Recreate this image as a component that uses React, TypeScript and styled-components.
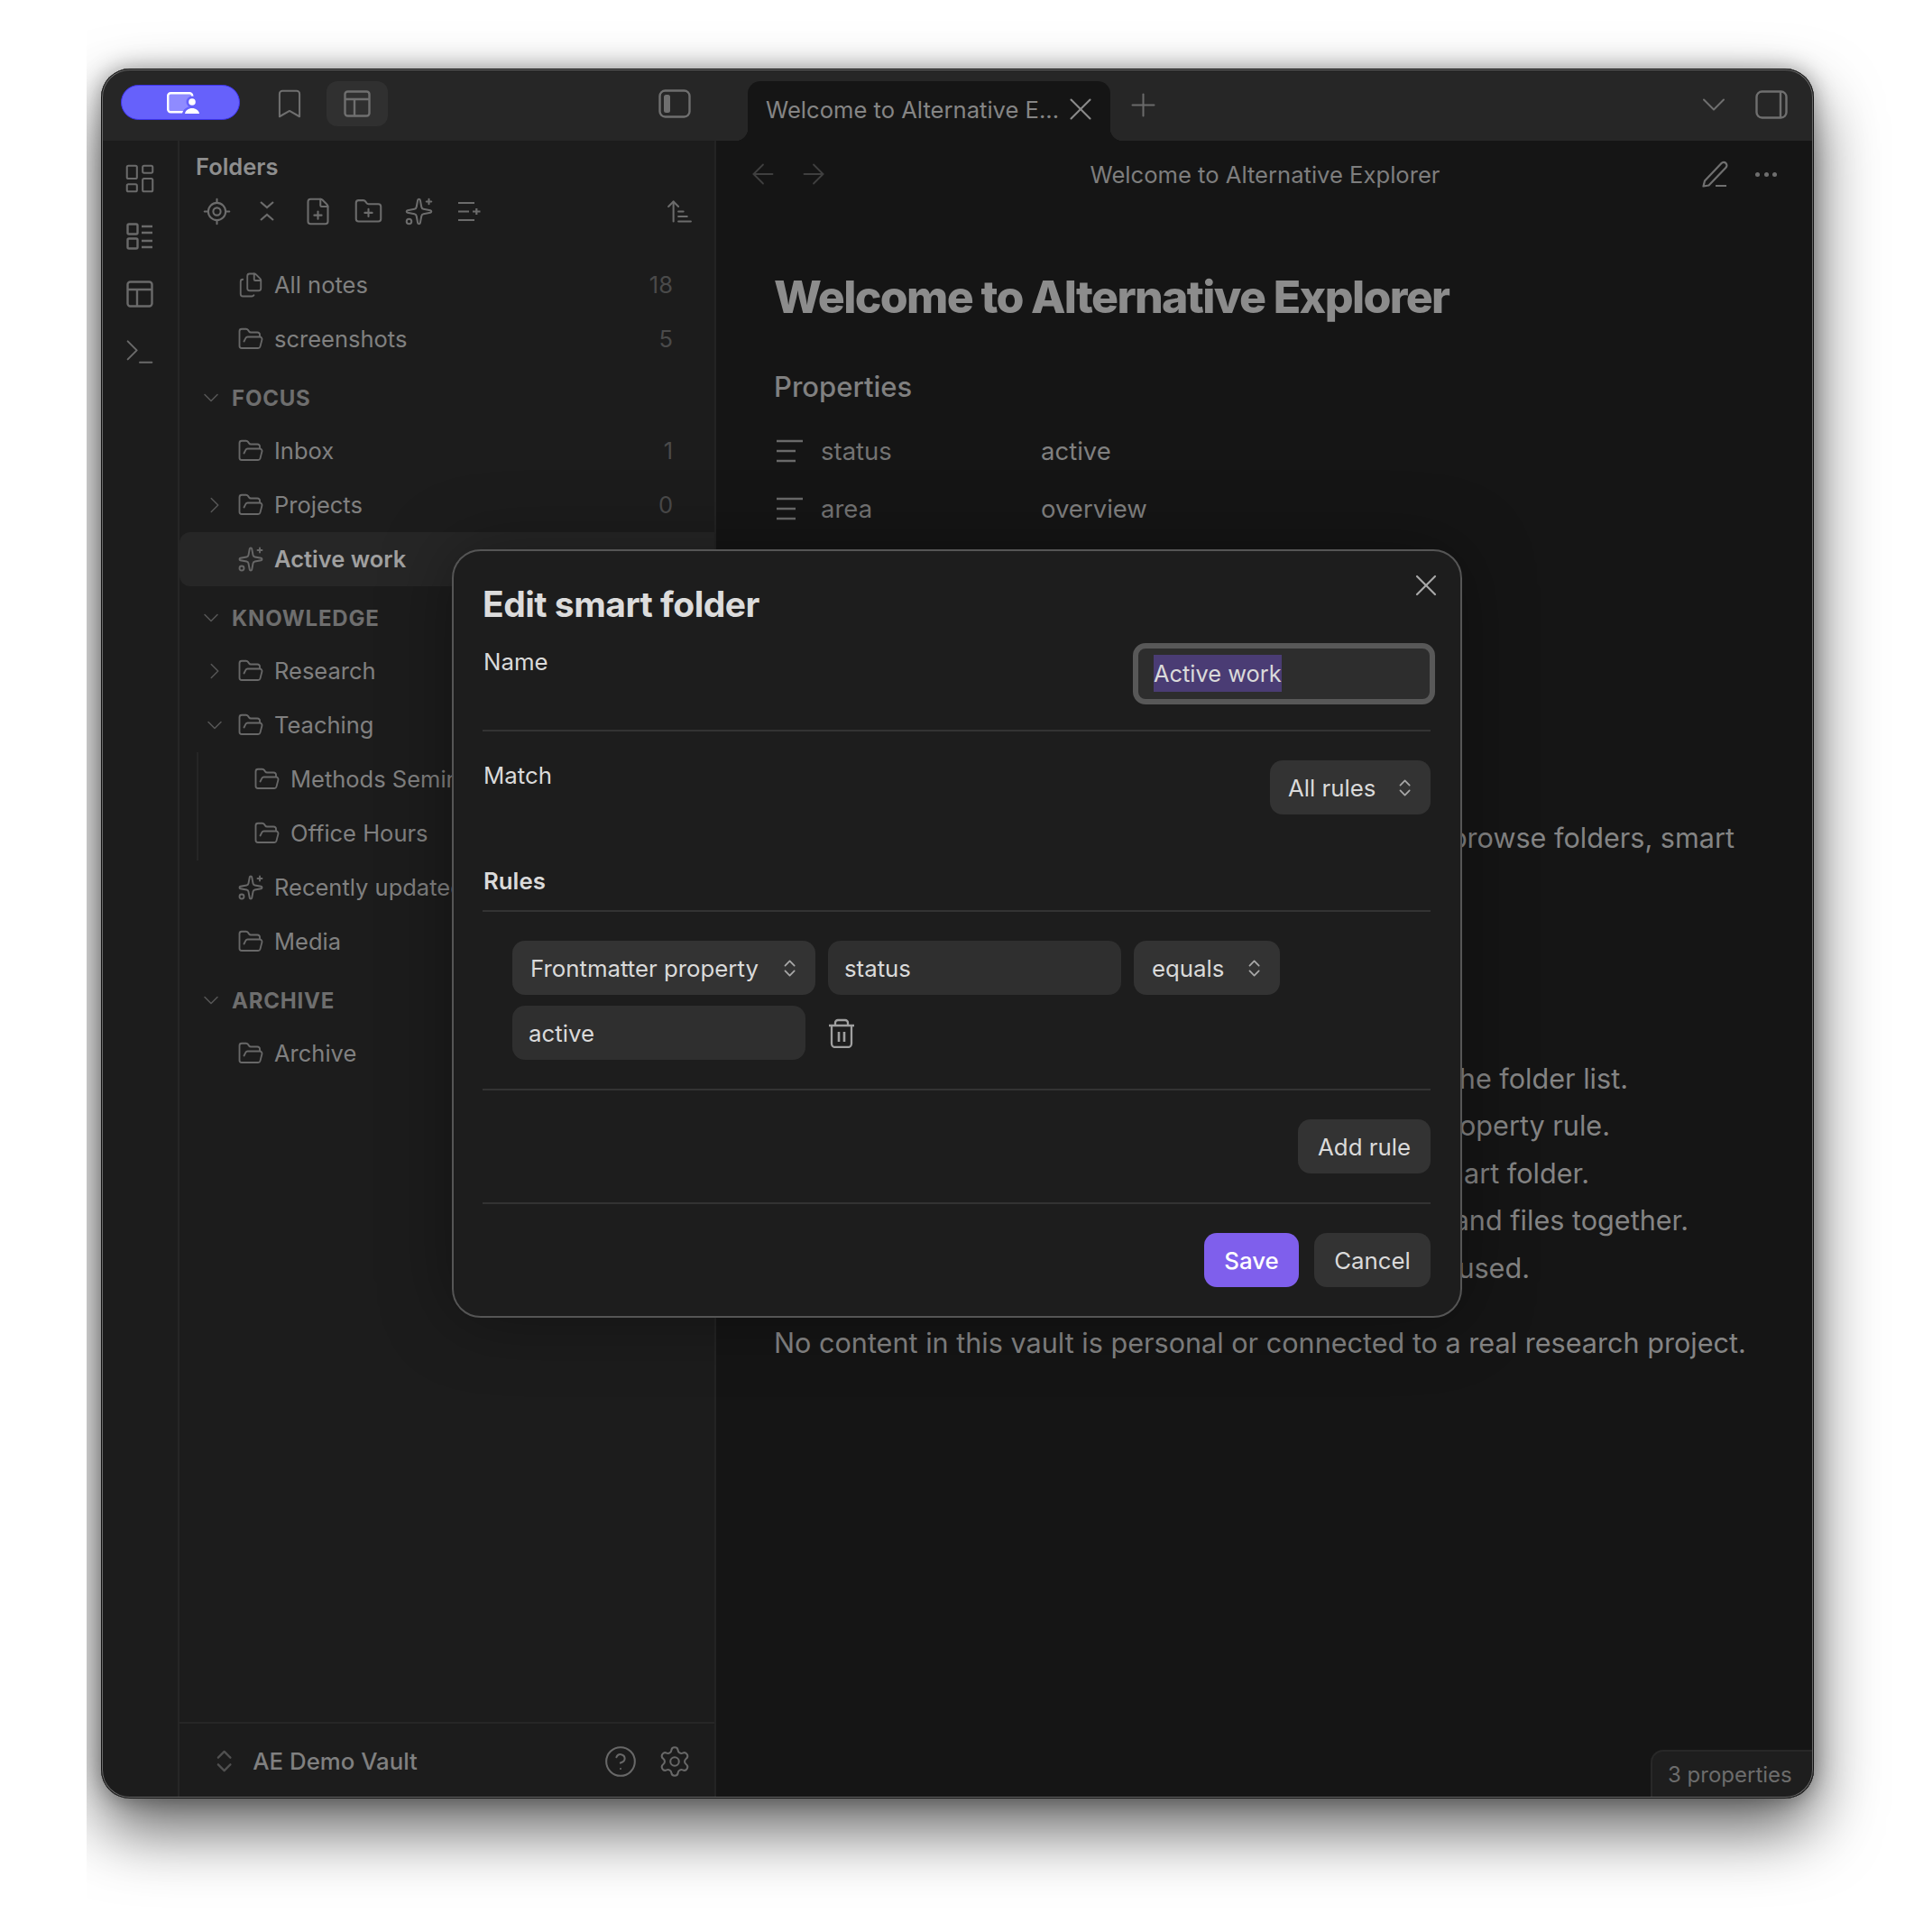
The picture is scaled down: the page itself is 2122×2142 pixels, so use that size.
import React from "react";
import styled, { createGlobalStyle } from "styled-components";
import {
  ArrowLeft,
  ArrowRight,
  ArrowUpNarrowWide,
  Bookmark,
  ChevronDown,
  ChevronRight,
  CircleHelp,
  FilePlus,
  Files,
  FolderOpen,
  FolderPlus,
  LayoutDashboard,
  LocateFixed,
  Plus,
  Settings,
  Sparkles,
  Terminal,
  X
} from "lucide-react";

const GlobalStyle = createGlobalStyle`
  html, body { margin: 0; padding: 0; background: #fff; }
  body { font-family: Inter, "Noto Sans", sans-serif; }
  * { box-sizing: border-box; }
  svg { flex-shrink: 0; }
`;

const Stage = styled.div`
  width: 2026px;
  height: 2142px;
  margin-left: 96px;
  padding: 76px 0 0 16px;
  overflow: hidden;
  background: #fff;
`;

const Win = styled.div`
  position: relative;
  width: 1899px;
  height: 1918px;
  border-radius: 32px;
  background: #1c1c1c;
  overflow: hidden;
  box-shadow: 0 34px 72px rgba(0, 0, 0, 0.62), 0 0 24px rgba(0, 0, 0, 0.35);
  &::after {
    content: "";
    position: absolute;
    inset: 0;
    border-radius: 32px;
    border: 2px solid #6a6a6a;
    outline: 1px solid #111;
    outline-offset: -1px;
    pointer-events: none;
  }
`;

const TitleBar = styled.div`
  display: flex;
  height: 80px;
  background: #262626;
`;

const TitleLeft = styled.div`
  display: flex;
  align-items: center;
  width: 682px;
  padding: 0 28px 2px 22px;
`;

const Pill = styled.div`
  display: flex;
  align-items: center;
  justify-content: center;
  width: 132px;
  height: 39px;
  margin-bottom: 3px;
  padding-left: 6px;
  border-radius: 20px;
  background: #6661fb;
  border: 1px solid #3d33ee;
`;

const TitleBtn = styled.div<{ $active?: boolean }>`
  display: flex;
  align-items: center;
  justify-content: center;
  width: ${({ $active }) => ($active ? "68px" : "44px")};
  height: 50px;
  margin-left: ${({ $active }) => ($active ? "19px" : "33px")};
  border-radius: 12px;
  color: #6f6f6f;
  background: ${({ $active }) => ($active ? "#303030" : "transparent")};
`;

const LeftToggle = styled.div`
  display: flex;
  margin-left: auto;
  color: #6f6f6f;
`;

const TabStrip = styled.div`
  flex: 1;
  display: flex;
  align-items: center;
`;

const Tab = styled.div`
  position: relative;
  display: flex;
  align-items: center;
  align-self: flex-end;
  width: 402px;
  height: 66px;
  margin-left: 35px;
  padding: 0 12px 4px 20px;
  border-radius: 14px 14px 0 0;
  background: #151515;
  color: #858585;
  font-size: 25.6px;
  &::before,
  &::after {
    content: "";
    position: absolute;
    bottom: 0;
    width: 14px;
    height: 14px;
  }
  &::before {
    left: -14px;
    background: radial-gradient(circle at 0 0, #262626 14px, #151515 14.5px);
  }
  &::after {
    right: -14px;
    background: radial-gradient(circle at 100% 0, #262626 14px, #151515 14.5px);
  }
`;

const TabLabel = styled.span`
  flex: 1;
  white-space: nowrap;
`;

const TabClose = styled.div`
  display: flex;
  color: #8a8a8a;
`;

const NewTab = styled.div`
  display: flex;
  margin-left: 16px;
  color: #6a6a6a;
`;

const TabChevron = styled.div`
  display: flex;
  margin: 0 24px 0 auto;
  color: #6f6f6f;
`;

const RightToggle = styled.div`
  display: flex;
  margin-right: 29px;
  color: #6f6f6f;
`;

const Body = styled.div`
  display: flex;
  height: 1838px;
`;

const Ribbon = styled.div`
  display: flex;
  flex-direction: column;
  align-items: center;
  width: 87px;
  padding-top: 10px;
  border-right: 2px solid #262626;
  background: #1c1c1c;
  color: #6a6a6a;
`;

const RibbonIcon = styled.div`
  display: flex;
  align-items: center;
  height: 64px;
`;

const Sidebar = styled.div`
  display: flex;
  flex-direction: column;
  width: 595px;
  background: #1c1c1c;
  border-right: 2px solid #232323;
`;

const PaneTitle = styled.div`
  margin: 14px 0 0 18px;
  font-size: 25.5px;
  line-height: 30px;
  font-weight: 600;
  color: #8e8e8e;
`;

const Toolbar = styled.div`
  display: flex;
  align-items: center;
  gap: 28px;
  height: 30px;
  margin-top: 19px;
  padding: 0 25px 0 27px;
  color: #6c6c6c;
`;

const ToolIcon = styled.div<{ $end?: boolean }>`
  display: flex;
  justify-content: center;
  width: 28px;
  margin-left: ${({ $end }) => ($end ? "auto" : "0")};
`;

const Tree = styled.div`
  margin-top: 37px;
`;

const Row = styled.div<{ $active?: boolean; $nested?: boolean }>`
  display: flex;
  align-items: center;
  height: 60px;
  padding: 0 46px 1px ${({ $nested }) => ($nested ? "61px" : "24px")};
  border-radius: 12px 0 0 12px;
  background: ${({ $active }) => ($active ? "#262626" : "transparent")};
  color: ${({ $active }) => ($active ? "#a0a0a0" : "#808080")};
  font-size: 25.5px;
  font-weight: ${({ $active }) => ($active ? 600 : 400)};
`;

const Caret = styled.div`
  display: flex;
  justify-content: center;
  width: 30px;
  margin-right: 10px;
  color: #565656;
`;

const RowIcon = styled.div`
  display: flex;
  width: 30px;
  margin-right: 11px;
  color: #686868;
`;

const RowLabel = styled.span`
  flex: 1;
  white-space: nowrap;
`;

const RowCount = styled.span`
  color: #4a4a4a;
`;

const Section = styled.div`
  display: flex;
  align-items: center;
  height: 58px;
  margin-top: 6px;
  padding-left: 21px;
  color: #6e6e6e;
  font-size: 24px;
  font-weight: 700;
  letter-spacing: 0.8px;
`;

const SectionCaret = styled.div`
  display: flex;
  width: 37px;
  color: #565656;
`;

const Nested = styled.div`
  margin-left: 19px;
  border-left: 2px solid #262626;
`;

const PaneFooter = styled.div`
  display: flex;
  align-items: center;
  height: 85px;
  margin-top: auto;
  padding: 0 25px 0 41px;
  border-top: 2px solid #262626;
  color: #808080;
  font-size: 25.8px;
  font-weight: 500;
`;

const VaultName = styled.span`
  flex: 1;
  margin-left: 23px;
`;

const FootIcon = styled.div`
  display: flex;
  margin-left: 22px;
  color: #686868;
`;

const FootCaret = styled.div`
  display: flex;
  color: #505050;
`;

const Main = styled.div`
  flex: 1;
  background: #151515;
`;

const NavBar = styled.div`
  display: grid;
  grid-template-columns: 1fr auto 1fr;
  align-items: center;
  height: 74px;
  padding: 0 41px;
  color: #7e7e7e;
  font-size: 25.6px;
`;

const NavArrows = styled.div`
  display: flex;
  gap: 20px;
  margin-left: -7px;
  color: #3f3f3f;
`;

const NavActions = styled.div`
  display: flex;
  justify-content: flex-end;
  align-items: center;
  gap: 30px;
  color: #707070;
`;

const Dots = styled.div`
  display: flex;
  gap: 4.5px;
  & i {
    width: 5px;
    height: 5px;
    border-radius: 50%;
    background: #6e6e6e;
  }
`;

const Content = styled.div`
  padding-left: 64px;
  color: #848484;
  font-size: 30.6px;
`;

const H1 = styled.h1`
  margin: 69px 0 0;
  font-size: 50px;
  line-height: 60px;
  font-weight: 800;
  letter-spacing: -1.65px;
  color: #8c8c8c;
`;

const PropsHead = styled.div`
  margin-top: 50px;
  font-size: 31px;
  line-height: 40px;
  font-weight: 500;
  color: #808080;
`;

const PropList = styled.div`
  margin-top: 19px;
`;

const PropRow = styled.div`
  display: flex;
  align-items: center;
  height: 64px;
`;

const PropIcon = styled.svg`
  width: 32px;
  height: 26px;
  margin: 0 18px 0 2px;
  color: #6a6a6a;
`;

const PropKey = styled.span`
  width: 244px;
  color: #737373;
  font-size: 27.5px;
`;

const PropValue = styled.span`
  font-size: 27.5px;
  color: #808080;
`;

const Line = styled.div<{ $end: number; $top?: number }>`
  width: ${({ $end }) => $end}px;
  margin-top: ${({ $top }) => $top ?? 0}px;
  text-align: right;
  white-space: nowrap;
  line-height: 52.5px;
`;

const Para = styled.p`
  margin: 31px 0 0;
  line-height: 52px;
  white-space: nowrap;
`;

const PropsTag = styled.div`
  position: absolute;
  right: 0;
  bottom: 0;
  width: 181px;
  height: 54px;
  padding: 11px 0 0 17px;
  border: 2px solid #282828;
  border-width: 2px 0 0 2px;
  border-radius: 14px 0 0 0;
  background: #1e1e1e;
  color: #6c6c6c;
  font-size: 24px;
`;

const Modal = styled.div`
  position: absolute;
  left: 389px;
  top: 533px;
  width: 1120px;
  height: 852px;
  padding: 36px 33px 0 32px;
  border: 2px solid #555;
  border-radius: 32px;
  background: #1d1d1d;
  color: #dadada;
  font-size: 25.8px;
  box-shadow: 0 0 80px rgba(0, 0, 0, 0.35);
`;

const ModalClose = styled.div`
  position: absolute;
  top: 18px;
  right: 18px;
  display: flex;
  color: #a8a8a8;
`;

const ModalTitle = styled.h2`
  margin: 0;
  font-size: 39px;
  line-height: 46px;
  font-weight: 700;
  letter-spacing: -0.5px;
  color: #dcdcdc;
`;

const Setting = styled.div<{ $first?: boolean }>`
  display: flex;
  justify-content: space-between;
  align-items: flex-start;
  margin-top: ${({ $first }) => ($first ? "20px" : "0")};
  padding: ${({ $first }) => ($first ? "0 0 28px 0" : "32px 0 0 0")};
  border-bottom: ${({ $first }) => ($first ? "2px solid #333" : "0")};
`;

const SettingLabel = styled.div<{ $first?: boolean }>`
  margin: ${({ $first }) => ($first ? "4px 0 0 1px" : "0 0 0 1px")};
  line-height: 34px;
`;

const FocusInput = styled.div`
  width: 335px;
  height: 68px;
  margin-right: -5px;
  padding-left: 17px;
  border: 6px solid #585858;
  border-radius: 14px;
  background: #2d2d2d;
  font-size: 25.4px;
  line-height: 56px;
`;

const Selected = styled.span`
  padding: 5px 0;
  background: #4a3c74;
`;

const Select = styled.div<{ $w: number }>`
  display: flex;
  align-items: center;
  justify-content: space-between;
  width: ${({ $w }) => $w}px;
  height: 60px;
  padding: 0 22px 0 20px;
  border-radius: 14px;
  background: #333;
  color: #dadada;
  white-space: nowrap;
`;

const UpDown = styled.div`
  display: flex;
  color: #a8a8a8;
`;

const TextField = styled.div<{ $w: number }>`
  display: flex;
  align-items: center;
  width: ${({ $w }) => $w}px;
  height: 60px;
  padding-left: 18px;
  border-radius: 14px;
  background: #2f2f2f;
`;

const RulesHead = styled.div`
  margin-top: 57px;
  padding: 0 0 15px 1px;
  line-height: 34px;
  font-weight: 600;
  border-bottom: 2px solid #333;
`;

const RuleBlock = styled.div`
  padding: 32px 0 32px 33px;
  border-bottom: 2px solid #333;
`;

const RuleRow = styled.div<{ $second?: boolean }>`
  display: flex;
  align-items: center;
  gap: 14px;
  margin-top: ${({ $second }) => ($second ? "12px" : "0")};
`;

const TrashBtn = styled.div`
  display: flex;
  margin-left: 11px;
  color: #a0a0a0;
`;

const AddRow = styled.div`
  display: flex;
  justify-content: flex-end;
  padding: 32px 0;
  border-bottom: 2px solid #333;
`;

const Actions = styled.div`
  display: flex;
  justify-content: flex-end;
  gap: 17px;
  padding-top: 32px;
`;

const Button = styled.div<{ $w: number; $primary?: boolean }>`
  display: flex;
  align-items: center;
  justify-content: center;
  width: ${({ $w }) => $w}px;
  height: 60px;
  border-radius: 14px;
  background: ${({ $primary }) => ($primary ? "#7f5fec" : "#333")};
  color: ${({ $primary }) => ($primary ? "#fff" : "#dadada")};
  font-weight: ${({ $primary }) => ($primary ? 500 : 400)};
`;

function VaultGlyph() {
  return (
    <svg width="36" height="24" viewBox="0 0 36 24" fill="none">
      <rect x="1.200" y="1.200" width="27" height="21" rx="3" fill="#8f8bff" stroke="#fff" strokeWidth="2.400" />
      <circle cx="28" cy="11" r="6.500" fill="#6661fb" />
      <path d="M17 24c1-5 5-8 11-8s10 3 8 8z" fill="#6661fb" />
      <circle cx="28" cy="11" r="3.800" fill="#fff" />
      <path d="M20 24c.5-3.500 4-6 8-6s7.500 2.500 8 6z" fill="#fff" />
    </svg>
  );
}

function LayoutGlyph() {
  return (
    <svg width="30" height="30" viewBox="0 0 30 30" fill="none" stroke="currentColor" strokeWidth="2.400" strokeLinejoin="round">
      <rect x="1.500" y="1.500" width="27" height="27" rx="3" />
      <path d="M1.500 10h27M12 10v18.500" />
    </svg>
  );
}

function PanelGlyph({ side }: { side: "left" | "right" }) {
  return (
    <svg width="36" height="32" viewBox="0 0 36 32" fill="none">
      <rect x="1.500" y="1.500" width="33" height="29" rx="6" stroke="currentColor" strokeWidth="2.400" />
      {side === "left" ? (
        <rect x="6" y="6" width="7" height="20" rx="2.500" fill="currentColor" />
      ) : (
        <path d="M28 2v28" stroke="currentColor" strokeWidth="2.400" />
      )}
    </svg>
  );
}

function ListBoxes() {
  return (
    <svg width="30" height="30" viewBox="0 0 30 30" fill="none" stroke="currentColor" strokeWidth="2.400" strokeLinejoin="round">
      <rect x="1.500" y="1.500" width="11" height="11" rx="1.500" />
      <rect x="1.500" y="17.500" width="11" height="11" rx="1.500" />
      <path d="M17 4h12M17 11h12M17 20h12M17 27h12" />
    </svg>
  );
}

function AddLines() {
  return (
    <svg width="26" height="22" viewBox="0 0 26 22" fill="none" stroke="currentColor" strokeWidth="2.200">
      <path d="M1 2h18M1 11.500h12M1 21h18M17 11.500h8.500M21.300 8v7" />
    </svg>
  );
}

function Collapse() {
  return (
    <svg width="18" height="24" viewBox="0 0 18 24" fill="none" stroke="currentColor" strokeWidth="2.200">
      <path d="M2 2l7 6 7-6M2 22l7-6 7 6" />
    </svg>
  );
}

function UpDownGlyph({ h }: { h: number }) {
  return (
    <svg width={(h * 18) / 26} height={h} viewBox="0 0 18 26" fill="none" stroke="currentColor" strokeWidth="2.400" strokeLinecap="round" strokeLinejoin="round">
      <path d="M2 9l7-7 7 7M2 17l7 7 7-7" />
    </svg>
  );
}

function PencilGlyph() {
  return (
    <svg width="29" height="30" viewBox="0 0 29 30" fill="none" stroke="currentColor" strokeWidth="2.200" strokeLinejoin="round">
      <path d="M1.500 28.500l1.500-6L21.500 3a3.400 3.400 0 0 1 5 4.700L7.500 27.500z" />
      <path d="M15 28h12" />
    </svg>
  );
}

function TrashGlyph() {
  return (
    <svg width="30" height="33" viewBox="0 0 30 33" fill="none" stroke="currentColor" strokeWidth="2.300">
      <path d="M1 8h28M8 8V5a3 3 0 0 1 3-3h8a3 3 0 0 1 3 3v3" />
      <path d="M4 8v20a4 4 0 0 0 4 4h14a4 4 0 0 0 4-4V8" />
      <path d="M12 15v11M18 15v11" strokeWidth="2.600" />
    </svg>
  );
}

const thin = { strokeWidth: 1.5 };

function FolderRow({ label, count, caret, active, nested, smart }: {
  label: string;
  count?: string;
  caret?: "right" | "down";
  active?: boolean;
  nested?: boolean;
  smart?: boolean;
}) {
  const Icon = smart ? Sparkles : FolderOpen;
  return (
    <Row $active={active} $nested={nested}>
      {!nested && (
        <Caret>
          {caret === "right" && <ChevronRight size={30} strokeWidth={1.2} />}
          {caret === "down" && <ChevronDown size={28} strokeWidth={1.300} />}
        </Caret>
      )}
      <RowIcon>
        <Icon size={30} {...thin} />
      </RowIcon>
      <RowLabel>{label}</RowLabel>
      {count && <RowCount>{count}</RowCount>}
    </Row>
  );
}

function SectionHead({ label }: { label: string }) {
  return (
    <Section>
      <SectionCaret>
        <ChevronDown size={28} strokeWidth={1.300} />
      </SectionCaret>
      {label}
    </Section>
  );
}

function PropLines() {
  return (
    <PropIcon viewBox="0 0 32 26" fill="none" stroke="currentColor" strokeWidth="2.400">
      <path d="M1 2h29M1 13h21M1 24h21" />
    </PropIcon>
  );
}

export default function App() {
  return (
    <>
      <GlobalStyle />
      <Stage>
        <Win>
          <TitleBar>
            <TitleLeft>
              <Pill>
                <VaultGlyph />
              </Pill>
              <TitleBtn>
                <Bookmark size={38} strokeWidth={1.300} />
              </TitleBtn>
              <TitleBtn $active>
                <LayoutGlyph />
              </TitleBtn>
              <LeftToggle>
                <PanelGlyph side="left" />
              </LeftToggle>
            </TitleLeft>
            <TabStrip>
              <Tab>
                <TabLabel>Welcome to Alternative E...</TabLabel>
                <TabClose>
                  <X size={42} strokeWidth={1.200} />
                </TabClose>
              </Tab>
              <NewTab>
                <Plus size={41} strokeWidth={1.200} />
              </NewTab>
              <TabChevron>
                <ChevronDown size={44} strokeWidth={1.100} />
              </TabChevron>
              <RightToggle>
                <PanelGlyph side="right" />
              </RightToggle>
            </TabStrip>
          </TitleBar>
          <Body>
            <Ribbon>
              <RibbonIcon>
                <LayoutDashboard size={38} strokeWidth={1.300} />
              </RibbonIcon>
              <RibbonIcon>
                <ListBoxes />
              </RibbonIcon>
              <RibbonIcon>
                <LayoutGlyph />
              </RibbonIcon>
              <RibbonIcon>
                <Terminal size={40} strokeWidth={1.200} />
              </RibbonIcon>
            </Ribbon>
            <Sidebar>
              <PaneTitle>Folders</PaneTitle>
              <Toolbar>
                <ToolIcon><LocateFixed size={33} {...thin} /></ToolIcon>
                <ToolIcon><Collapse /></ToolIcon>
                <ToolIcon><FilePlus size={33} {...thin} /></ToolIcon>
                <ToolIcon><FolderPlus size={33} {...thin} /></ToolIcon>
                <ToolIcon><Sparkles size={33} {...thin} /></ToolIcon>
                <ToolIcon><AddLines /></ToolIcon>
                <ToolIcon $end><ArrowUpNarrowWide size={33} {...thin} /></ToolIcon>
              </Toolbar>
              <Tree>
                <Row>
                  <Caret />
                  <RowIcon><Files size={30} {...thin} /></RowIcon>
                  <RowLabel>All notes</RowLabel>
                  <RowCount>18</RowCount>
                </Row>
                <FolderRow label="screenshots" count="5" />
                <SectionHead label="FOCUS" />
                <FolderRow label="Inbox" count="1" />
                <FolderRow label="Projects" count="0" caret="right" />
                <FolderRow label="Active work" active smart />
                <SectionHead label="KNOWLEDGE" />
                <FolderRow label="Research" caret="right" />
                <FolderRow label="Teaching" caret="down" />
                <Nested>
                  <FolderRow label="Methods Seminar" nested />
                  <FolderRow label="Office Hours" nested />
                </Nested>
                <FolderRow label="Recently updated" smart />
                <FolderRow label="Media" />
                <SectionHead label="ARCHIVE" />
                <FolderRow label="Archive" />
              </Tree>
              <PaneFooter>
                <FootCaret><UpDownGlyph h={25} /></FootCaret>
                <VaultName>AE Demo Vault</VaultName>
                <FootIcon><CircleHelp size={38} strokeWidth={1.300} /></FootIcon>
                <FootIcon><Settings size={38} strokeWidth={1.300} /></FootIcon>
              </PaneFooter>
            </Sidebar>
            <Main>
              <NavBar>
                <NavArrows>
                  <ArrowLeft size={36} strokeWidth={1.200} />
                  <ArrowRight size={36} strokeWidth={1.200} />
                </NavArrows>
                <span>Welcome to Alternative Explorer</span>
                <NavActions>
                  <PencilGlyph />
                  <Dots><i /><i /><i /></Dots>
                </NavActions>
              </NavBar>
              <Content>
                <H1>Welcome to Alternative Explorer</H1>
                <PropsHead>Properties</PropsHead>
                <PropList>
                  <PropRow>
                    <PropLines />
                    <PropKey>status</PropKey>
                    <PropValue>active</PropValue>
                  </PropRow>
                  <PropRow>
                    <PropLines />
                    <PropKey>area</PropKey>
                    <PropValue>overview</PropValue>
                  </PropRow>
                </PropList>
                <Line $end={1065} $top={307}>browse folders, smart</Line>
                <Line $end={947} $top={214}>the folder list.</Line>
                <Line $end={927}>property rule.</Line>
                <Line $end={904}>smart folder.</Line>
                <Line $end={1014}>and files together.</Line>
                <Line $end={838}>used.</Line>
                <Para>No content in this vault is personal or connected to a real research project.</Para>
              </Content>
            </Main>
          </Body>
          <PropsTag>3 properties</PropsTag>
          <Modal>
            <ModalClose><X size={40} strokeWidth={1.300} /></ModalClose>
            <ModalTitle>Edit smart folder</ModalTitle>
            <Setting $first>
              <SettingLabel $first>Name</SettingLabel>
              <FocusInput><Selected>Active work</Selected></FocusInput>
            </Setting>
            <Setting>
              <SettingLabel>Match</SettingLabel>
              <Select $w={178}>
                All rules
                <UpDown><UpDownGlyph h={19} /></UpDown>
              </Select>
            </Setting>
            <RulesHead>Rules</RulesHead>
            <RuleBlock>
              <RuleRow>
                <Select $w={336}>
                  Frontmatter property
                  <UpDown><UpDownGlyph h={19} /></UpDown>
                </Select>
                <TextField $w={325}>status</TextField>
                <Select $w={162}>
                  equals
                  <UpDown><UpDownGlyph h={19} /></UpDown>
                </Select>
              </RuleRow>
              <RuleRow $second>
                <TextField $w={325}>active</TextField>
                <TrashBtn><TrashGlyph /></TrashBtn>
              </RuleRow>
            </RuleBlock>
            <AddRow>
              <Button $w={147}>Add rule</Button>
            </AddRow>
            <Actions>
              <Button $w={105} $primary>Save</Button>
              <Button $w={129}>Cancel</Button>
            </Actions>
          </Modal>
        </Win>
      </Stage>
    </>
  );
}
